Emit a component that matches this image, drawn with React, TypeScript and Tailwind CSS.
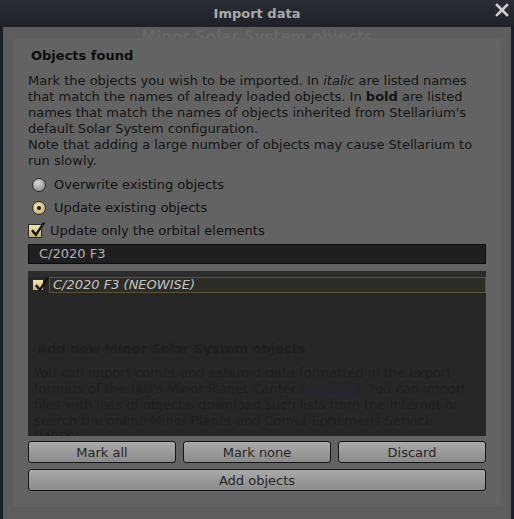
import React from 'react'

const font = { fontFamily: '"DejaVu Sans", Verdana, sans-serif' }

function Radio({ checked, label }: { checked?: boolean; label: string }) {
  return (
    <div className="flex items-center h-[23px] pl-[4px]">
      <span
        className={
          'w-[14px] h-[14px] rounded-full border border-[#2a2a2a] flex items-center justify-center ' +
          (checked
            ? 'bg-[radial-gradient(circle_at_40%_35%,#f3e7b0,#b9a25e)]'
            : 'bg-[radial-gradient(circle_at_40%_35%,#d8d8d8,#7c7c7c)]')
        }
      >
        {checked && <span className="w-[4px] h-[4px] rounded-full bg-[#1a1a1a]" />}
      </span>
      <span className="ml-[8px] text-[13px] text-[#111]">{label}</span>
    </div>
  )
}

function Check({ size = 14 }: { size?: number }) {
  return (
    <span
      className="relative inline-block border border-[#2a2a2a] bg-[linear-gradient(#f0e4ae,#c7b16c)]"
      style={{ width: size, height: size }}
    >
      <svg viewBox="0 0 14 14" className="absolute left-[1px] -top-[3px] w-[15px] h-[15px]">
        <path d="M2.5 8.5 L5.5 12 L12.5 1.5" fill="none" stroke="#111" strokeWidth="2.2" strokeLinecap="square" />
      </svg>
    </span>
  )
}

function Btn({ children, className = '' }: { children: React.ReactNode; className?: string }) {
  return (
    <button
      className={
        'h-[22px] rounded-[3px] border border-[#151515] bg-[linear-gradient(#a9a9a9,#8b8b8b)] text-[13px] text-[#262626] leading-none ' +
        className
      }
      style={font}
    >
      {children}
    </button>
  )
}

export default function App() {
  return (
    <div className="w-[514px] h-[519px] bg-[#1b1e29] overflow-hidden" style={font}>
      {/* Title bar */}
      <div className="relative h-[27px] bg-[linear-gradient(#2a2d34,#1f2127)] flex items-center justify-center">
        <span className="text-[13px] font-bold text-[#a9a9a9]">Import data</span>
        <span className="absolute right-[5px] top-[3px] text-[#cfcfcf]">
          <svg viewBox="0 0 14 14" className="w-[14px] h-[14px]">
            <path d="M2 2 L12 12 M12 2 L2 12" stroke="currentColor" strokeWidth="2.6" strokeLinecap="square" />
          </svg>
        </span>
      </div>

      {/* Body */}
      <div className="relative ml-[3px] mr-[3px] h-[492px] bg-[#5d5d5d] pt-[11px] px-[10px]">
        {/* window behind, seen through */}
        <div className="absolute left-0 right-0 -top-[1px] text-center text-[15px] font-bold text-[#676767]">
          Minor Solar System objects
        </div>

        <div className="relative h-[469px] rounded-[5px] bg-[#636363] pt-[9px] px-[15px]">
          <div className="pl-[3px] text-[13px] font-bold text-[#0d0d0d] leading-[18px]">Objects found</div>
          <div className="mt-[8px] text-[13px] leading-[16px] text-[#151515]">
            <div>
              Mark the objects you wish to be imported. In <i>italic</i> are listed names that match the names of
              already loaded objects. In <b>bold</b> are listed names that match the names of objects inherited from
              Stellarium's default Solar System configuration.
            </div>
            <div>Note that adding a large number of objects may cause Stellarium to run slowly.</div>
          </div>

          <div className="mt-[4px]">
            <Radio label="Overwrite existing objects" />
            <Radio checked label="Update existing objects" />
            <div className="flex items-center h-[23px]">
              <Check />
              <span className="ml-[8px] text-[13px] text-[#111]">Update only the orbital elements</span>
            </div>
          </div>

          <div className="mt-[2px] h-[20px] border border-[#0c0c0c] bg-[#1f1f21] flex items-center pl-[10px] text-[13px] text-[#b2b2b2]">
            C/2020 F3
          </div>

          <div className="relative mt-[7px] h-[165px] bg-[#262626] overflow-hidden">
            <div className="h-[6px] bg-[#2c2c2c]" />
            <div className="flex items-center h-[16px] pl-[4px]">
              <Check size={12} />
              <div className="ml-[5px] flex-1 h-[16px] border border-[#5e5234] bg-[#2e2c27] flex items-center pl-[3px] text-[13px] italic text-[#c4c4c4]">
                C/2020 F3 (NEOWISE)
              </div>
            </div>
            {/* window behind, seen through */}
            <div className="absolute left-[6px] right-[2px] top-[68px] text-[#1f1f1f]">
              <div className="pl-[3px] text-[13px] font-bold leading-[20px]">Add new Minor Solar System objects</div>
              <div className="mt-[6px] text-[13px] leading-[16px]">
                You can import comet and asteroid data formatted in the export formats of the IAU's Minor Planet Center
                (<span className="underline text-[#24243a]">website</span>). You can import files with lists of
                objects, download such lists from the Internet or search the online Minor Planet and Comet Ephemeris
                Service (MPES).
              </div>
            </div>
          </div>

          <div className="mt-[5px] grid grid-cols-3 gap-[7px]">
            <Btn>Mark all</Btn>
            <Btn>Mark none</Btn>
            <Btn>Discard</Btn>
          </div>
          <Btn className="mt-[6px] w-full">Add objects</Btn>
        </div>
      </div>
    </div>
  )
}
